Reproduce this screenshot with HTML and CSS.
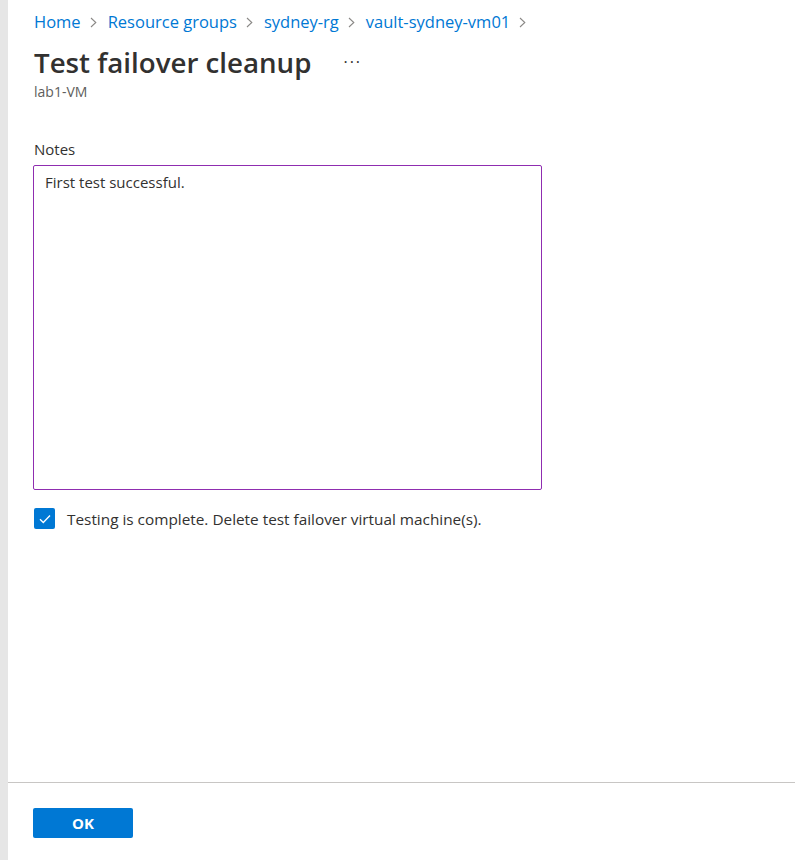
FILE: index.html
```html
<!DOCTYPE html>
<html>
<head>
<meta charset="utf-8">
<link rel="stylesheet" href="styles.css">
</head>
<body>
<div class="strip"></div>
<div class="blade">
  <div class="content">
    <nav class="crumbs">
      <a>Home</a><span class="sep"><svg width="7" height="11" viewBox="0 0 7 11"><path d="M1 1 L5.8 5.5 L1 10" fill="none" stroke="#8a8886" stroke-width="1.1"/></svg></span>
      <a>Resource groups</a><span class="sep"><svg width="7" height="11" viewBox="0 0 7 11"><path d="M1 1 L5.8 5.5 L1 10" fill="none" stroke="#8a8886" stroke-width="1.1"/></svg></span>
      <a>sydney-rg</a><span class="sep"><svg width="7" height="11" viewBox="0 0 7 11"><path d="M1 1 L5.8 5.5 L1 10" fill="none" stroke="#8a8886" stroke-width="1.1"/></svg></span>
      <a>vault-sydney-vm01</a><span class="sep"><svg width="7" height="11" viewBox="0 0 7 11"><path d="M1 1 L5.8 5.5 L1 10" fill="none" stroke="#8a8886" stroke-width="1.1"/></svg></span>
    </nav>
    <div class="title-row">
      <h1>Test failover cleanup</h1>
      <span class="more">···</span>
    </div>
    <div class="subtitle">lab1-VM</div>

    <label class="field-label">Notes</label>
    <div class="textarea">First test successful.</div>

    <div class="check-row">
      <span class="checkbox"><svg width="14" height="14" viewBox="0 0 14 14"><path d="M2 7.2 L5.3 10.5 L12 3.5" fill="none" stroke="#fff" stroke-width="1.3"/></svg></span>
      <span class="check-label">Testing is complete. Delete test failover virtual machine(s).</span>
    </div>
  </div>
  <div class="footer">
    <button class="ok">OK</button>
  </div>
</div>
</body>
</html>
```
FILE: styles.css
```css
html, body {
  margin: 0;
  padding: 0;
  height: 100%;
}
body {
  display: flex;
  font-family: "Open Sans", "Noto Sans", sans-serif;
  color: #323130;
  background: #fff;
}
.strip {
  width: 8px;
  background: #e6e6e6;
  flex: none;
}
.blade {
  flex: 1;
  display: flex;
  flex-direction: column;
  height: 860px;
}
.content {
  flex: 1;
  padding: 0 0 0 26px;
}
.crumbs {
  display: flex;
  align-items: center;
  height: 42px;
  font-size: 16.5px;
  color: #0078d4;
}
.crumbs a {
  color: #0078d4;
}
.sep {
  display: inline-flex;
  padding: 2px 11px 0 9px;
}
.title-row {
  display: flex;
  align-items: center;
  height: 40px;
}
h1 {
  margin: 0;
  font-size: 27.7px;
  font-weight: 600;
  color: #323130;
}
.more {
  margin-left: 32px;
  font-size: 16px;
  letter-spacing: 2px;
}
.subtitle {
  font-size: 14px;
  color: #605e5c;
}
.field-label {
  display: block;
  margin-top: 38px;
  font-size: 15px;
}
.textarea {
  box-sizing: border-box;
  margin-top: 6px;
  width: 509px;
  height: 325px;
  border: 1px solid #8f2db0;
  border-radius: 2px;
  padding: 6px 11px;
  font-size: 15px;
  margin-left: -1px;
}
.check-row {
  display: flex;
  align-items: center;
  margin-top: 18px;
}
.checkbox {
  width: 21px;
  height: 21px;
  border-radius: 2px;
  background: #0078d4;
  display: inline-flex;
  align-items: center;
  justify-content: center;
}
.check-label {
  margin-left: 12px;
  font-size: 15.35px;
}
.footer {
  border-top: 1px solid #c8c6c4;
  height: 78px;
  padding: 25px 0 0 25px;
  box-sizing: border-box;
}
.ok {
  width: 100px;
  height: 30px;
  background: #0078d4;
  color: #fff;
  border: none;
  border-radius: 2px;
  font-family: inherit;
  font-weight: 700;
  font-size: 15px;
}
```
